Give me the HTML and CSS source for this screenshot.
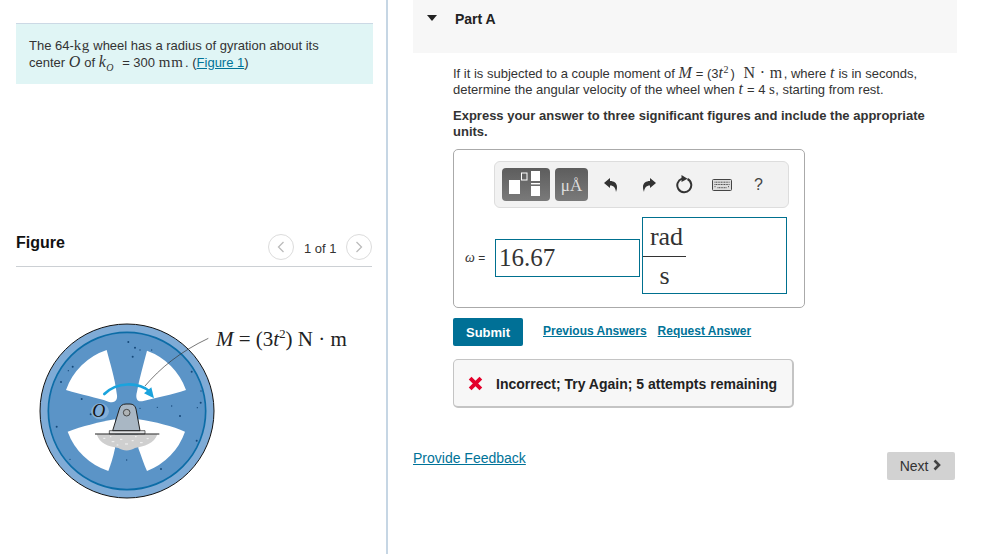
FILE: index.html
```html
<!DOCTYPE html>
<html lang="en">
<head>
<meta charset="utf-8">
<title>Part A</title>
<link rel="stylesheet" href="styles.css">
</head>
<body>
<div class="page">
  <aside class="left">
    <div class="intro">The 64-<span class="m">kg</span> wheel has a radius of gyration about its<br>center <i class="m big">O</i> of <i class="m big">k</i><sub class="msub">O</sub> = 300 <span class="m mm">mm</span>. (<a href="#">Figure 1</a>)</div>
    <div class="fig-head">
      <h2>Figure</h2>
      <div class="pager">
        <span class="circ"><svg width="10" height="14" viewBox="0 0 10 14"><path d="M7.5 2 L2.5 7 L7.5 12" class="chev"/></svg></span>
        <span class="count">1 of 1</span>
        <span class="circ"><svg width="10" height="14" viewBox="0 0 10 14"><path d="M2.5 2 L7.5 7 L2.5 12" class="chev"/></svg></span>
      </div>
    </div>
    <svg class="wheel" width="354" height="190" viewBox="48 0 1062 570">
      <g class="w-art">
      <circle cx="381" cy="303" r="261" class="w-outer"/>
      <circle cx="381" cy="303" r="236" class="w-inner"/>
      <path class="w-win" d="M320 120 A194 194 0 0 0 198 240 C245 255 290 262 325 275 C345 282 355 270 350 250 C345 205 330 160 320 120Z"/>
      <path class="w-win" d="M441 122 A194 194 0 0 1 558 240 C515 255 470 262 430 273 C412 278 405 265 411 245 C418 205 430 165 441 122Z"/>
      <path class="w-win" d="M203 365 C245 350 300 335 345 328 L345 415 C340 440 332 465 325 483 A194 194 0 0 1 203 365Z"/>
      <path class="w-win" d="M555 365 C520 350 465 335 415 328 L415 415 C425 440 432 465 441 483 A194 194 0 0 0 555 365Z"/>
      <path class="w-ground" d="M290 373 H472 C465 400 430 410 405 414 C390 424 370 424 355 414 C325 410 298 400 290 373Z"/>
      <path class="w-speck" d="M310 385 h6 M335 395 h8 M360 388 h7 M375 402 h9 M395 392 h6 M420 398 h8 M440 386 h6 M350 405 h5 M405 380 h5 M330 380 h4"/>
      <g class="w-dots">
        <circle cx="385" cy="96" r="3"/><circle cx="405" cy="113" r="3"/><circle cx="420" cy="120" r="2"/><circle cx="398" cy="140" r="3"/><circle cx="218" cy="170" r="3"/><circle cx="205" cy="182" r="2"/><circle cx="183" cy="216" r="3"/><circle cx="575" cy="185" r="3"/><circle cx="603" cy="243" r="2"/><circle cx="602" cy="278" r="3"/><circle cx="592" cy="293" r="2"/><circle cx="540" cy="318" r="3"/><circle cx="515" cy="288" r="2"/><circle cx="472" cy="292" r="2"/><circle cx="245" cy="267" r="3"/><circle cx="170" cy="350" r="3"/><circle cx="590" cy="392" r="3"/><circle cx="210" cy="448" r="2"/><circle cx="483" cy="477" r="3"/><circle cx="380" cy="450" r="2"/><circle cx="420" cy="295" r="2"/><circle cx="455" cy="120" r="2"/><circle cx="272" cy="313" r="3"/>
      </g>
      <ellipse cx="300" cy="304" rx="27" ry="24" class="w-halo"/>
      <path class="w-line" d="M625 85 C540 125 480 175 435 228"/>
      <path class="w-arc" d="M313 252 C350 215 415 215 450 245"/>
      <path class="w-head" d="M462 265 L432 250 L454 232Z"/>
      <path class="w-plate" d="M328 362 H435 V372 H328Z"/>
      <path class="w-brk" d="M338 362 L358 297 Q362 282 378 282 L390 282 Q404 282 408 297 L420 362Z"/>
      <circle cx="380" cy="308" r="10" class="w-pin"/>
      <path class="w-base" d="M285 372 H478"/>
      </g>
      <text x="277" y="322" class="w-o">O</text>
      <text x="648" y="107" class="w-label"><tspan class="it">M</tspan> = (3<tspan class="it">t</tspan><tspan class="w-sup" dy="-22">2</tspan><tspan dy="22">) N · m</tspan></text>
    </svg>
  </aside>
  <main class="right">
    <header class="part">
      <svg class="caret" width="10" height="6" viewBox="0 0 10 6"><path d="M0 0 H10 L5 6Z"/></svg>
      <h3>Part A</h3>
    </header>
    <div class="content">
      <p class="q">If it is subjected to a couple moment of <i class="m big">M</i> = (3<i class="m big">t</i><sup class="msup">2</sup>) <span class="m big unitm">N · m</span>, where <i class="m big">t</i> is in seconds,<br>determine the angular velocity of the wheel when <i class="m big">t</i> = 4 <span class="m">s</span>, starting from rest.</p>
      <p class="q strong">Express your answer to three significant figures and include the appropriate units.</p>
      <div class="answer">
        <div class="toolbar">
          <div class="tbtn tpl">
            <svg width="48" height="33" viewBox="0 0 48 33">
              <rect x="7" y="12" width="11" height="14" fill="#fff"/>
              <rect x="19.5" y="5" width="5.5" height="7" fill="none" stroke="#fff"/>
              <rect x="29" y="3" width="9" height="10" fill="#fff"/>
              <rect x="29" y="15" width="9" height="1.4" fill="#fff"/>
              <rect x="29" y="18" width="9" height="10" fill="#fff"/>
            </svg>
          </div>
          <div class="tbtn mu">μÅ</div>
          <svg class="ticon first" width="14" height="15" viewBox="0 0 14 15"><path d="M0 6 L6 1 V4 C10 4 13 6 13 10 C13 12 12.5 13.5 12 15 C11.5 11 10 8.5 6 8.5 V11Z"/></svg>
          <svg class="ticon i2" width="14" height="15" viewBox="0 0 14 15"><path d="M14 6 L8 1 V4 C4 4 1 6 1 10 C1 12 1.5 13.5 2 15 C2.5 11 4 8.5 8 8.5 V11Z"/></svg>
          <svg class="ticon i3" width="18" height="19" viewBox="0 0 18 19"><path class="reset" d="M11.5 4 A7 7 0 1 1 6 3.6"/><path d="M5.5 0 L11.5 3.8 L5.5 7Z"/></svg>
          <svg class="ticon i4" width="20" height="12" viewBox="0 0 20 12">
            <rect x=".5" y=".5" width="19" height="11" rx="1" class="kb"/>
            <path class="keys" d="M2.5 3.2 H17.5 M2.5 5.5 H17.5 M2.5 7.7 H3.8 M5.5 8.7 H14.5 M16 7.7 H17.5"/>
          </svg>
          <span class="help">?</span>
        </div>
        <div class="eq">
          <span class="lbl"><i class="om">ω</i> =</span>
          <div class="field val">16.67</div>
          <div class="field unit">
            <div class="frac"><span class="num">rad</span><span class="den">s</span></div>
          </div>
        </div>
      </div>
      <div class="actions">
        <button class="submit" type="button">Submit</button>
        <a href="#" class="alink">Previous Answers</a>
        <a href="#" class="alink">Request Answer</a>
      </div>
      <div class="feedback">
        <svg width="15" height="15" viewBox="0 0 14 14"><path d="M2 2 L12 12 M12 2 L2 12" class="x"/></svg>
        <span>Incorrect; Try Again; 5 attempts remaining</span>
      </div>
    </div>
    <footer class="bottom">
      <a href="#" class="pf">Provide Feedback</a>
      <button class="next" type="button">Next <svg width="10" height="12" viewBox="0 0 10 12"><path d="M2.5 1.5 L7 6 L2.5 10.5" class="nchev"/></svg></button>
    </footer>
  </main>
</div>
</body>
</html>
```
FILE: styles.css
```css
* { box-sizing: border-box; }
html, body { margin: 0; padding: 0; height: 100%; background: #fff; }
body { font-family: "Liberation Sans", Arial, sans-serif; color: #333; font-size: 13px; overflow: hidden; }
a { color: #007398; }
.page { display: flex; height: 554px; }
.left { width: 388px; flex: none; border-right: 2px solid #c6d6e4; padding: 23px 13px 0 16px; }
.intro { background: #e0f5f5; border-top: 1px solid #ccd9e5; height: 61px; padding: 13px 13px 0; line-height: 17px; width: 357px; }
.m { font-family: "Liberation Serif", serif; font-size: 15px; line-height: 0; letter-spacing: .4px; }
.big { font-size: 16px; }
.mm { letter-spacing: 1px; margin-right: 1px; }
.unitm { margin-left: 5px; margin-right: 1px; }
.msub { font-family: "Liberation Serif", serif; font-style: italic; font-size: 10px; line-height: 0; margin-right: 5px; }
.msup { font-family: "Liberation Serif", serif; font-size: 10px; line-height: 0; margin-right: 2px; }
.fig-head { display: flex; justify-content: space-between; align-items: flex-start; height: 183px; padding-top: 149px; border-bottom: 1px solid #ccd0d4; width: 356px; }
.fig-head h2 { margin: 0; font-size: 16px; line-height: 20px; color: #111; font-weight: bold; }
.pager { display: flex; align-items: center; gap: 9.5px; margin-top: 1px; color: #333; }
.circ { width: 26px; height: 26px; border: 1px solid #dcdcdc; border-radius: 50%; display: flex; align-items: center; justify-content: center; }
.chev { fill: none; stroke: #bbb; stroke-width: 1.3; }
.count { position: relative; top: 1px; }
.wheel { display: block; margin-top: 43px; }
.w-art { filter: blur(.8px); }
.w-outer { fill: #7fabd6; stroke: #111; stroke-width: 3; }
.w-inner { fill: #5b94c7; stroke: #0c6ca6; stroke-width: 5; }
.w-win { fill: #fff; }
.w-ground { fill: #cfcfcf; }
.w-speck { stroke: #f4f4f4; stroke-width: 3; fill: none; }
.w-dots { fill: #16497a; }
.w-halo { fill: #82aed8; }
.w-line { fill: none; stroke: #333; stroke-width: 2; }
.w-arc { fill: none; stroke: #1aa3dd; stroke-width: 8; stroke-linecap: round; }
.w-head { fill: #1aa3dd; }
.w-plate { fill: #e2e4e6; stroke: #222; stroke-width: 2; }
.w-brk { fill: #a9b7c4; stroke: #222; stroke-width: 3; }
.w-pin { fill: #b0b4b6; stroke: #333; stroke-width: 2.5; }
.w-base { stroke: #222; stroke-width: 3; }
.w-o { font-family: "Liberation Serif", serif; font-style: italic; font-size: 54px; fill: #111; }
.w-label { font-family: "Liberation Serif", serif; font-size: 63px; fill: #222; }
.w-label .it { font-style: italic; }
.w-sup { font-size: 38px; }
.right { flex: 1; padding-left: 25px; min-width: 0; }
.part { width: 544px; height: 53px; background: #f7f7f7; display: flex; align-items: flex-start; padding: 11px 0 0 14px; }
.caret { fill: #222; margin-top: 4px; }
.part h3 { margin: 0 0 0 18px; font-size: 14px; line-height: 16px; font-weight: bold; color: #222; }
.content { margin-left: 40px; width: 490px; }
.q { margin: 0; line-height: 16px; }
.content > .q:first-child { margin-top: 13px; }
.q.strong { font-weight: bold; margin-top: 10px; width: 480px; }
.answer { width: 352px; height: 159px; border: 1px solid #aaa; border-radius: 5px; margin-top: 9px; padding: 11px 0 0 0; }
.toolbar { margin-left: 40px; width: 295px; height: 47px; background: #f2f2f2; border: 1px solid #ddd; border-radius: 6px; display: flex; align-items: center; padding-left: 7px; }
.tbtn { height: 33px; border-radius: 4px; background: linear-gradient(#5d5d5d, #7a7a7a); }
.tpl { width: 48px; }
.tpl svg { display: block; }
.mu { width: 33px; margin-left: 5px; color: #ddd; font-family: "Liberation Serif", serif; font-size: 17px; line-height: 35px; text-align: center; }
.ticon { fill: #333; flex: none; }
.first { margin-left: 16px; }
.i2 { margin-left: 24px; }
.i3 { margin-left: 20px; }
.i4 { margin-left: 18px; }
.reset { fill: none; stroke: #333; stroke-width: 2; }
.kb { fill: #ddd; stroke: #444; }
.keys { stroke: #444; fill: none; stroke-width: 1; stroke-dasharray: 1 .6; }
.help { margin-left: 22px; font-size: 16px; color: #444; }
.eq { display: flex; align-items: flex-start; margin-top: 9px; margin-left: 11px; }
.lbl { width: 30px; margin-top: 33px; font-size: 12px; color: #333; }
.om { font-family: "Liberation Serif", serif; font-size: 14px; }
.field { width: 145px; border: 1px solid #00708f; font-family: "Liberation Serif", serif; color: #333; font-size: 25px; }
.val { height: 38px; margin-top: 22px; padding-left: 3px; line-height: 36px; }
.unit { height: 77px; margin-left: 2px; font-size: 26px; }
.frac { width: 43px; display: flex; flex-direction: column; align-items: center; }
.num { height: 39px; width: 100%; padding-left: 4px; text-align: center; line-height: 37px; border-bottom: 1px solid #333; }
.den { line-height: 37px; }
.actions { display: flex; align-items: center; margin-top: 10px; height: 28px; }
.submit { width: 70px; height: 28px; background: #007096; color: #fff; border: 0; border-radius: 2px; font: bold 13px "Liberation Sans", Arial, sans-serif; padding: 0; }
.alink { font-weight: bold; font-size: 12px; margin-left: 11px; position: relative; top: -1px; }
.submit + .alink { margin-left: 20px; }
.feedback { width: 341px; height: 49px; margin-top: 13px; background: #f7f7f7; border: 1px solid #c4c4c4; border-bottom-width: 2px; border-right-width: 2px; border-radius: 5px; display: flex; align-items: center; padding: 1px 0 0 14px; gap: 13px; font-weight: bold; font-size: 14px; color: #222; }
.x { stroke: #e4002b; stroke-width: 3.6; fill: none; }
.bottom { width: 542px; display: flex; justify-content: space-between; align-items: flex-start; margin-top: 44px; }
.pf { font-size: 14px; line-height: 16px; margin-top: -2px; }
.next { width: 68px; height: 28px; background: #d2d2d2; border: 0; border-radius: 2px; color: #333; font: 14px "Liberation Sans", Arial, sans-serif; padding: 0; }
.nchev { fill: none; stroke: #444; stroke-width: 2.6; }
```
